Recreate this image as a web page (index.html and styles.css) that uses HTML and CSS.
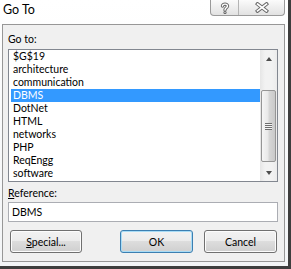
FILE: index.html
```html
<!DOCTYPE html>
<html lang="en">
<head>
<meta charset="UTF-8" />
<title>Go To</title>
<link rel="stylesheet" href="styles.css">
</head>
<body>

<div class="frame">
  <div class="titlebar">
    <span class="title">Go To</span>
    <div class="caption">
      <div class="cap-btn help">
        <svg width="10" height="12" viewBox="0 0 10 12">
          <path d="M2.5 4 C2.5 1.5 7.5 1.5 7.5 4 C7.5 5.8 5 5.8 5 8" fill="none" stroke="#6b6b6b" stroke-width="3.4" stroke-linecap="round"/>
          <circle cx="5" cy="10.5" r="1.6" fill="#6b6b6b"/>
          <path d="M2.5 4 C2.5 1.5 7.5 1.5 7.5 4 C7.5 5.8 5 5.8 5 8" fill="none" stroke="#fff" stroke-width="1.4" stroke-linecap="round"/>
          <circle cx="5" cy="10.5" r="0.6" fill="#fff"/>
        </svg>
      </div>
      <div class="cap-btn close">
        <svg width="14" height="11" viewBox="0 0 14 11">
          <path d="M2.5 2 L11.5 9 M11.5 2 L2.5 9" stroke="#6b6b6b" stroke-width="3.6" stroke-linecap="square"/>
          <path d="M2.5 2 L11.5 9 M11.5 2 L2.5 9" stroke="#fff" stroke-width="1.6" stroke-linecap="square"/>
        </svg>
      </div>
    </div>
  </div>

  <div class="client">
    <div class="label">Go to:</div>

    <div class="listbox">
      <div class="items">
        <div class="item">$G$19</div>
        <div class="item">architecture</div>
        <div class="item">communication</div>
        <div class="item selected">DBMS</div>
        <div class="item">DotNet</div>
        <div class="item">HTML</div>
        <div class="item">networks</div>
        <div class="item">PHP</div>
        <div class="item">ReqEngg</div>
        <div class="item">software</div>
      </div>
      <div class="scrollbar">
        <div class="arrow-btn"><span class="arrow up"></span></div>
        <div class="track">
          <div class="thumb" style="margin-top: 23px; height: 72px;">
            <div class="grip"></div>
          </div>
        </div>
        <div class="arrow-btn"><span class="arrow down"></span></div>
      </div>
    </div>

    <div class="label ref-label"><u>R</u>eference:</div>
    <div class="textbox">DBMS</div>

    <div class="buttons">
      <button class="btn"><u>S</u>pecial...</button>
      <button class="btn default">OK</button>
      <button class="btn">Cancel</button>
    </div>
  </div>
</div>

</body>
</html>
```

FILE: styles.css
```css
body {
  margin: 0;
  font-family: 'Lato', 'Liberation Sans', sans-serif;
  font-size: 10.5px;
  color: #000;
  background: #fafbfc;
}

.frame {
  width: 288px;
  height: 266px;
  border-right: 3px solid #3e3e3e;
  border-bottom: 3px solid #3e3e3e;
  background: linear-gradient(180deg, #ffffff 0%, #f3f5f7 100%);
  display: flex;
  flex-direction: column;
}

/* Title bar */
.titlebar {
  height: 24px;
  display: flex;
  align-items: flex-start;
}

.title {
  font-size: 12.5px;
  margin: 2px 0 0 3px;
  line-height: 16px;
}

.caption {
  margin-left: auto;
  margin-right: 3px;
  display: flex;
  height: 15px;
  border: 1px solid #9a9a9a;
  border-top: none;
  border-radius: 0 0 4px 4px;
  background: linear-gradient(180deg, #fbfbfb 0%, #eeeeee 50%, #e2e2e2 100%);
  overflow: hidden;
}

.cap-btn {
  display: flex;
  justify-content: center;
  align-items: center;
}

.help {
  width: 27px;
  border-right: 1px solid #b4b4b4;
}

.close {
  width: 45px;
}

/* Client area */
.client {
  margin-left: 2px;
  width: 283px;
  height: 238px;
  box-sizing: border-box;
  border: 1px solid #979797;
  background: #f0f0f0;
  padding: 8px 6px 0 5px;
}

.label {
  line-height: 13px;
  height: 13px;
}

.listbox {
  margin-top: 3px;
  height: 133px;
  box-sizing: border-box;
  border: 1px solid #828790;
  background: #fff;
  display: flex;
}

.items {
  flex: 1;
  padding-left: 2px;
}

.item {
  height: 13px;
  line-height: 13px;
  padding-left: 2px;
  white-space: nowrap;
}

.item.selected {
  background: #3399ff;
  color: #fff;
}

.scrollbar {
  width: 17px;
  display: flex;
  flex-direction: column;
  background: linear-gradient(90deg, #e6e6e6 0%, #f2f2f2 30%, #f2f2f2 70%, #ebebeb 100%);
}

.arrow-btn {
  height: 17px;
  display: flex;
  justify-content: center;
  align-items: center;
}

.arrow {
  width: 0;
  height: 0;
  border-left: 3.5px solid transparent;
  border-right: 3.5px solid transparent;
}

.arrow.up {
  border-bottom: 4px solid #4d4d4d;
}

.arrow.down {
  border-top: 4px solid #4d4d4d;
}

.track {
  flex: 1;
}

.thumb {
  margin: 0 1px;
  box-sizing: border-box;
  border: 1px solid #959595;
  border-radius: 2px;
  background: linear-gradient(90deg, #f5f5f5 0%, #e8e8e8 45%, #d6d6d6 55%, #c9c9c9 100%);
  display: flex;
  justify-content: center;
  align-items: center;
}

.grip {
  width: 7px;
  height: 7px;
  background: repeating-linear-gradient(180deg, #6e6e6e 0, #6e6e6e 1px, #f4f4f4 1px, #f4f4f4 2px);
}

.ref-label {
  margin-top: 5px;
}

.textbox {
  margin-top: 2px;
  height: 20px;
  box-sizing: border-box;
  border: 1px solid #abadb3;
  background: #fff;
  line-height: 18px;
  padding-left: 3px;
}

.buttons {
  margin-top: 8px;
  display: flex;
  padding-left: 2px;
  padding-right: 1px;
}

.btn {
  height: 23px;
  width: 73px;
  font-family: inherit;
  font-size: inherit;
  color: #000;
  border: 1px solid #707070;
  border-radius: 3px;
  background: linear-gradient(180deg, #f2f2f2 0%, #ebebeb 50%, #dddddd 50%, #cfcfcf 100%);
  box-shadow: inset 0 0 0 1px #fcfcfc;
  padding: 0;
}

.btn:first-child {
  width: 72px;
  margin-right: auto;
}

.btn.default {
  border-color: #3c7fb1;
  box-shadow: inset 0 0 0 1px #a8dcf6;
  margin-right: 11px;
}
```
